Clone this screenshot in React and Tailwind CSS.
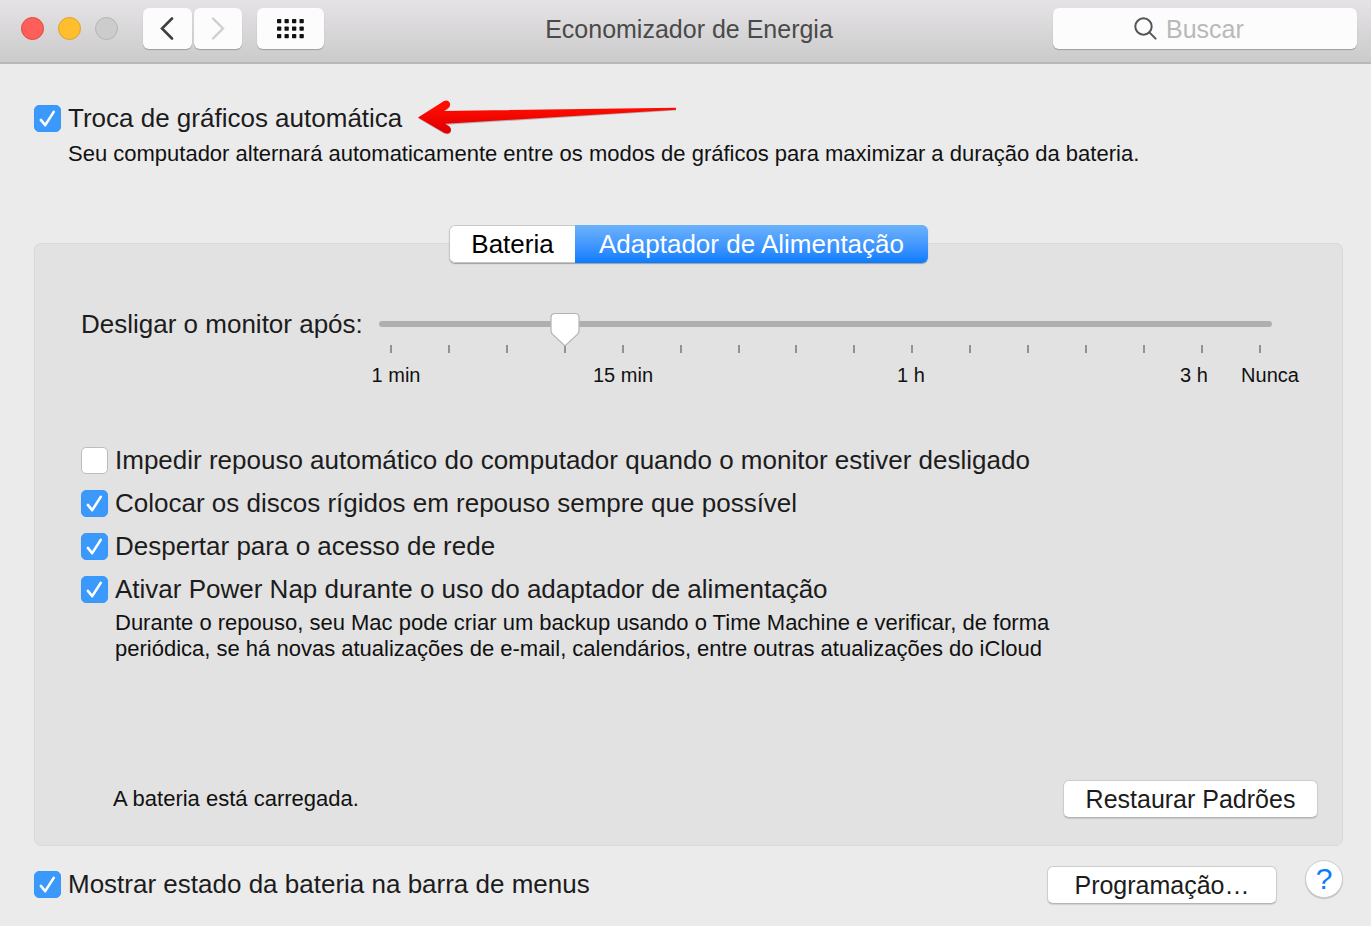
import React, { useState } from "react";

const TICKS = 16;

function Checkbox({ id, label, checked, onChange }) {
  return (
    <div className="flex items-center gap-[7px]">
      <span className="grid shrink-0 place-items-center">
        <input
          id={id}
          type="checkbox"
          checked={checked}
          onChange={onChange}
          className="col-start-1 row-start-1 size-[27px] appearance-none rounded-[5px] border border-[#bdbdbd] bg-white checked:border-[#3a96fb] checked:bg-[#3b99fc]"
        />
        {checked && (
          <svg
            viewBox="0 0 26 26"
            className="pointer-events-none col-start-1 row-start-1 size-[27px]"
            fill="none"
            stroke="white"
            strokeWidth="2.5"
            strokeLinecap="round"
            strokeLinejoin="round"
          >
            <path d="M6.6 14.4 L10.8 19.4 L19 6.6" />
          </svg>
        )}
      </span>
      <label htmlFor={id} className="text-[26px] leading-[30px] text-[#1c1c1c]">
        {label}
      </label>
    </div>
  );
}

function PushButton({ children, className }) {
  return (
    <button
      type="button"
      className={
        "h-[38px] rounded-[6px] border border-[#cdcdcd] border-b-[#b4b4b4] bg-white text-center text-[25px] leading-[30px] text-[#1c1c1c] shadow-[0_1px_1px_rgba(0,0,0,0.12)] " +
        className
      }
    >
      {children}
    </button>
  );
}

function TitleBar() {
  const toolButton =
    "flex h-[41px] items-center justify-center rounded-[6px] bg-[#fcfcfc] shadow-[0_1px_1px_rgba(0,0,0,0.25)] ";

  return (
    <header className="grid h-16 grid-cols-[1fr_auto_1fr] items-center border-b-2 border-[#b9b8b9] bg-linear-to-b from-[#e5e3e5] to-[#cccbcc] pr-[14px] pb-[5px] pl-[21px]">
      <div className="flex items-center">
        <div className="flex gap-[14px]">
          <button type="button" aria-label="Fechar" className="size-[23px] rounded-full border border-[#e2463f] bg-[#fe5f58]" />
          <button type="button" aria-label="Minimizar" className="size-[23px] rounded-full border border-[#e0a123] bg-[#febe2e]" />
          <button type="button" aria-label="Zoom" disabled className="size-[23px] rounded-full border border-[#b5b4b5] bg-[#cdcccd]" />
        </div>

        <div className="ml-[25px] flex gap-[2px]">
          <button type="button" aria-label="Voltar" className={toolButton + "w-[49px]"}>
            <svg width="14" height="23" viewBox="0 0 14 23" className="-ml-[2px]" fill="none" stroke="#3f3f3f" strokeWidth="2.6" strokeLinecap="round">
              <path d="M12 1.5 L2 11.5 L12 21.5" />
            </svg>
          </button>
          <button type="button" aria-label="Avançar" disabled className={toolButton + "w-[48px]"}>
            <svg width="14" height="23" viewBox="0 0 14 23" fill="none" stroke="#cfcfcf" strokeWidth="2.4" strokeLinecap="round">
              <path d="M2 1.5 L12 11.5 L2 21.5" />
            </svg>
          </button>
        </div>

        <button type="button" aria-label="Mostrar tudo" className={toolButton + "ml-[15px] w-[67px]"}>
          <svg width="27" height="20" viewBox="0 0 27 20" fill="#111">
            {[0, 7.5, 15].map((y) =>
              [0, 7.5, 15, 22.5].map((x) => (
                <rect key={x + "-" + y} x={x} y={y} width="4.3" height="4.3" rx="0.8" />
              ))
            )}
          </svg>
        </button>
      </div>

      <h1 className="text-[25px] leading-[30px] text-[#4a4a4a]">Economizador de Energia</h1>

      <div className="flex h-[41px] w-[304px] items-center gap-[9px] justify-self-end rounded-[6px] bg-[#fcfcfc] pl-[81px] shadow-[0_1px_1px_rgba(0,0,0,0.25)]">
        <svg width="23" height="23" viewBox="0 0 23 23" className="shrink-0" fill="none" stroke="#555" strokeWidth="2" strokeLinecap="round">
          <circle cx="9.5" cy="9.5" r="8.2" />
          <path d="M15.4 15.4 L21.6 21.6" />
        </svg>
        <input
          type="text"
          aria-label="Buscar"
          placeholder="Buscar"
          className="w-full min-w-0 bg-transparent text-[25px] leading-[30px] outline-none placeholder:text-[#b9b9b9]"
        />
      </div>
    </header>
  );
}

function MonitorSlider() {
  const [value, setValue] = useState(3);
  const ratio = value / (TICKS - 1);

  return (
    <div className="flex items-start gap-4">
      <label htmlFor="monitor" className="w-[282px] shrink-0 text-[26px] leading-[30px] whitespace-nowrap text-[#1c1c1c]">
        Desligar o monitor após:
      </label>

      <div className="min-w-0 flex-1">
        <div className="relative flex h-[30px] items-center">
          <input
            id="monitor"
            type="range"
            min="0"
            max={TICKS - 1}
            value={value}
            onChange={(e) => setValue(Number(e.target.value))}
            className="h-[6px] w-full appearance-none rounded-full bg-[#afafaf] [&::-webkit-slider-thumb]:size-6 [&::-webkit-slider-thumb]:appearance-none [&::-webkit-slider-thumb]:bg-transparent"
          />
          <svg
            width="32"
            height="36"
            viewBox="0 0 32 36"
            className="pointer-events-none absolute top-[3px] -translate-x-1/2"
            style={{ left: `calc(12px + (100% - 24px) * ${ratio})` }}
          >
            <path
              d="M6 1.5 H26 Q30 1.5 30 5.5 V18.5 Q30 20.5 28.6 22.2 L16 34 L3.4 22.2 Q2 20.5 2 18.5 V5.5 Q2 1.5 6 1.5 Z"
              fill="white"
              stroke="#b3b3b3"
              strokeWidth="1.2"
            />
          </svg>
        </div>

        <div className="mt-[6px] flex justify-between px-[11px]">
          {Array.from({ length: TICKS }, (_, i) => (
            <span key={i} className="h-[8px] w-[2px] bg-[#929292]" />
          ))}
        </div>

        {/* every label is centred on the right edge of its column */}
        <div className="mt-[10px] grid grid-cols-[17px_227fr_288fr_283fr_76fr] pr-[2px] text-[20px] leading-6 whitespace-nowrap text-[#111]">
          {["1 min", "15 min", "1 h", "3 h", "Nunca"].map((text) => (
            <span key={text} className="flex w-0 justify-center justify-self-end">
              {text}
            </span>
          ))}
        </div>
      </div>
    </div>
  );
}

export default function App() {
  const [options, setOptions] = useState({
    graphics: true,
    sleep: false,
    disks: true,
    network: true,
    nap: true,
    menu: true,
  });

  const toggle = (name) => () =>
    setOptions((prev) => ({ ...prev, [name]: !prev[name] }));

  return (
    <div className="min-h-screen bg-[#ebebeb] font-['Helvetica_Neue','Liberation_Sans',Arial,sans-serif]">
      <TitleBar />

      <main className="pt-[39px] pr-[28px] pb-[22px] pl-[34px]">
        {/* GRAPHICS */}
        <div className="flex items-center gap-[16px]">
          <Checkbox
            id="graphics"
            label="Troca de gráficos automática"
            checked={options.graphics}
            onChange={toggle("graphics")}
          />
          <svg width="260" height="36" viewBox="0 0 260 36" className="-my-[3px] shrink-0">
            <defs>
              <linearGradient id="arrow" x1="0" y1="0" x2="0" y2="1">
                <stop offset="0.2" stopColor="#ff0d00" />
                <stop offset="0.8" stopColor="#e40000" />
              </linearGradient>
            </defs>
            <path
              d="M0.5 18.6 L26 1.9 Q29.5 0.3 31.6 3.2 Q33.2 6.6 30 9 L26.5 11.5 L258 8.8 V10.6 L28 24.8 L31.6 27.2 Q34.2 30.2 32 33.3 Q29.6 35.4 26 33.6 Z"
              fill="#777"
              opacity="0.5"
            />
            <path
              d="M0 17.6 L26 1.1 Q29.5 -0.5 31.6 2.4 Q33.2 5.8 30 8.2 L26 11 L258 7.8 V9.8 L27 23.8 L31.6 26.4 Q34.2 29.4 32 32.4 Q29.6 34.5 26 32.7 Z"
              fill="url(#arrow)"
            />
          </svg>
        </div>
        <p className="mt-[8px] pl-[34px] text-[22px] leading-[26px] text-[#111]">
          Seu computador alternará automaticamente entre os modos de gráficos para maximizar a duração da bateria.
        </p>

        {/* POWER SOURCE */}
        <section className="mt-[76px] flex h-[603px] flex-col rounded-[7px] border border-[#d9d9d9] bg-[#e2e2e2]">
          <div className="-mt-[19px] flex h-[38px] self-center overflow-hidden rounded-[6px] text-[26px] leading-[30px] shadow-[0_1px_1px_rgba(0,0,0,0.3)]">
            <button
              type="button"
              className="w-[126px] rounded-l-[6px] border border-r-0 border-[#c8c8c8] bg-white text-black"
            >
              Bateria
            </button>
            <button
              type="button"
              className="w-[353px] bg-linear-to-b from-[#6bb2fb] to-[#067cff] text-white"
            >
              Adaptador de Alimentação
            </button>
          </div>

          <div className="mt-[46px] pr-[70px] pl-[46px]">
            <MonitorSlider />
          </div>

          <div className="mt-[58px] flex flex-col gap-[13px] pl-[46px]">
            <Checkbox
              id="sleep"
              label="Impedir repouso automático do computador quando o monitor estiver desligado"
              checked={options.sleep}
              onChange={toggle("sleep")}
            />
            <Checkbox
              id="disks"
              label="Colocar os discos rígidos em repouso sempre que possível"
              checked={options.disks}
              onChange={toggle("disks")}
            />
            <Checkbox
              id="network"
              label="Despertar para o acesso de rede"
              checked={options.network}
              onChange={toggle("network")}
            />
            <Checkbox
              id="nap"
              label="Ativar Power Nap durante o uso do adaptador de alimentação"
              checked={options.nap}
              onChange={toggle("nap")}
            />
          </div>
          <p className="mt-[6px] pl-[80px] text-[22px] leading-[26px] text-[#111]">
            Durante o repouso, seu Mac pode criar um backup usando o Time Machine e verificar, de forma
            <br />
            periódica, se há novas atualizações de e-mail, calendários, entre outras atualizações do iCloud
          </p>

          <div className="mt-auto flex items-center justify-between pr-[24px] pb-[27px] pl-[78px]">
            <p className="text-[22px] leading-[26px] text-[#111]">A bateria está carregada.</p>
            <PushButton className="w-[255px]">Restaurar Padrões</PushButton>
          </div>
        </section>

        {/* FOOTER */}
        <footer className="mt-[14px] flex items-start">
          <div className="mt-[9px] flex-1">
            <Checkbox
              id="menu"
              label="Mostrar estado da bateria na barra de menus"
              checked={options.menu}
              onChange={toggle("menu")}
            />
          </div>
          <PushButton className="mt-[6px] w-[230px]">Programação…</PushButton>
          <button
            type="button"
            aria-label="Ajuda"
            className="ml-[28px] size-[38px] rounded-full border border-[#cdcdcd] bg-white text-[30px] leading-[34px] text-[#0a7bff] shadow-[0_1px_1px_rgba(0,0,0,0.2)]"
          >
            ?
          </button>
        </footer>
      </main>
    </div>
  );
}
